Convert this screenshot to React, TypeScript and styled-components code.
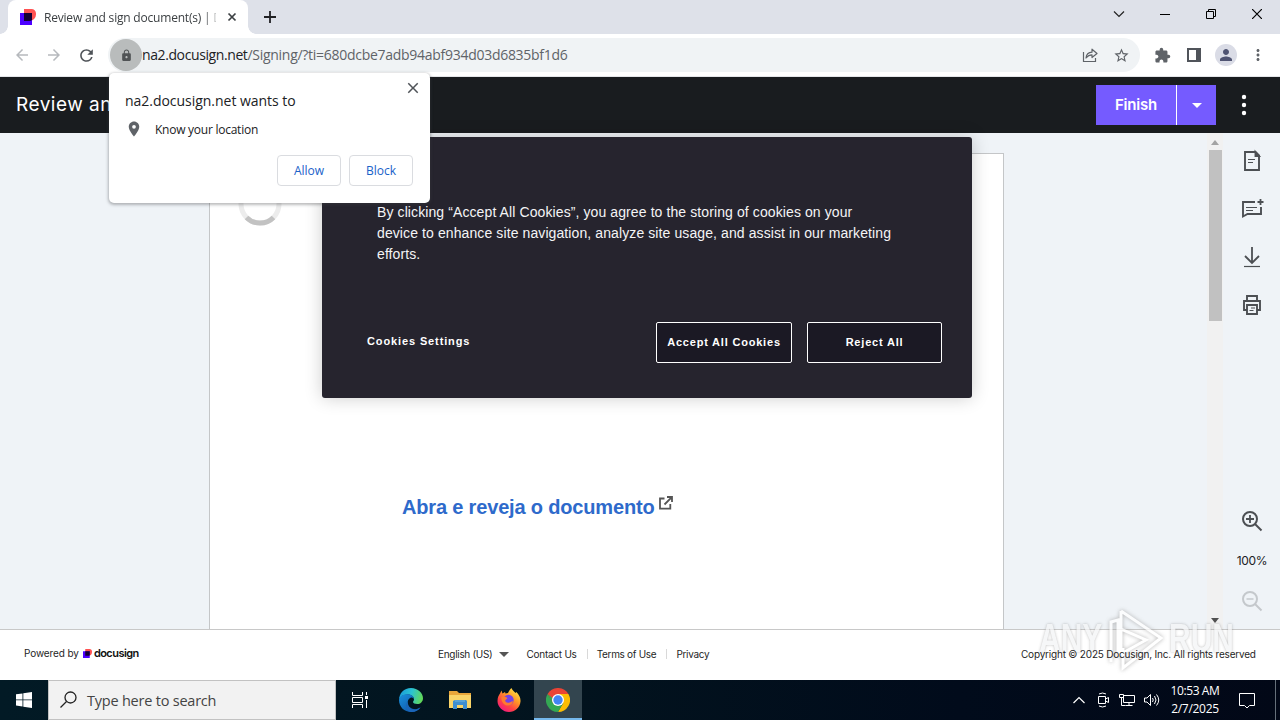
import styled, {createGlobalStyle} from "styled-components";
import * as React from "react";
import {
    MdArrowBack,
    MdArrowForward,
    MdClose,
    MdExtension,
    MdLock,
    MdMoreVert,
    MdPerson,
    MdPlace,
    MdRefresh,
    MdStarBorder,
} from "react-icons/md";

const system = `"Open Sans", "Noto Sans", sans-serif`;
const arial = `"Liberation Sans", Arial, sans-serif`;
const indigo = `Inter, "Liberation Sans", sans-serif`;

const GlobalStyle = createGlobalStyle`
    * {
        box-sizing: border-box;
    }
    body {
        margin: 0;
        overflow: hidden;
        font-family: ${system};
    }
    button {
        padding: 0;
        border: none;
        background: none;
        font: inherit;
    }
    svg {
        display: block;
        flex-shrink: 0;
    }
`;

const Screen = styled.div`
    position: relative;
    width: 1280px;
    height: 720px;
    display: flex;
    flex-direction: column;
    overflow: hidden;
    background: white;
`;

const Label = styled.span<{$size: number; $spacing?: number; $color?: string; $font?: string; $weight?: number}>`
    font-family: ${(p) => p.$font ?? system};
    font-size: ${(p) => p.$size}px;
    font-weight: ${(p) => p.$weight ?? 400};
    letter-spacing: ${(p) => p.$spacing ?? 0}px;
    color: ${(p) => p.$color ?? "#202124"};
    white-space: pre;
`;

/* browser */

const TabStrip = styled.div`
    height: 34px;
    flex-shrink: 0;
    display: flex;
    background: #dee1e9;
`;

const TabFoot = styled.div<{$side: "left" | "right"}>`
    width: 8px;
    height: 8px;
    margin-top: 26px;
    background: radial-gradient(circle at top ${(p) => p.$side}, transparent 7.5px, white 8px);
`;

const Tab = styled.div`
    width: 240px;
    height: 34px;
    padding: 0 10px 0 12px;
    display: flex;
    align-items: center;
    border-radius: 8px 8px 0 0;
    background: white;
`;

const TabTitle = styled.div`
    width: 172px;
    margin-left: 8px;
    line-height: 16px;
    mask-image: linear-gradient(to right, black 160px, rgba(0, 0, 0, 0.25) 172px);
`;

const TabClose = styled.div`
    margin-left: 11px;
`;

const NewTab = styled.div`
    padding: 11px 0 0 8px;
    flex: 1;
`;

const WindowButtons = styled.div`
    display: flex;
    height: 28px;
    align-items: center;
`;

const WindowButton = styled.button`
    width: 46px;
    display: flex;
    justify-content: center;
`;

const Toolbar = styled.div`
    height: 43px;
    flex-shrink: 0;
    display: flex;
    align-items: center;
    padding: 0 13px;
    border-bottom: 1px solid #e4e6e9;
    color: #5f6368;
`;

const NavButtons = styled.div`
    width: 95px;
    display: flex;
    gap: 14px;
    color: #b6b9bd;
    svg:last-child {
        color: #4f5358;
    }
`;

const Omnibox = styled.div`
    width: 1032px;
    height: 34px;
    padding: 0 10px 0 2px;
    display: flex;
    align-items: center;
    border-radius: 17px;
    background: #f0f3f5;
`;

const LockChip = styled.div`
    width: 32px;
    height: 32px;
    flex-shrink: 0;
    display: flex;
    align-items: center;
    justify-content: center;
    border-radius: 50%;
    background: #b9bcbc;
`;

const Url = styled.div`
    flex: 1;
    padding-bottom: 2px;
    white-space: nowrap;
`;

const OmniboxIcons = styled.div`
    display: flex;
    align-items: center;
    gap: 15px;
`;

const ToolbarIcons = styled.div`
    display: flex;
    align-items: center;
    margin-left: 14px;
`;

const Avatar = styled.div`
    width: 22px;
    height: 22px;
    margin: 0 12px 0 14px;
    display: flex;
    align-items: center;
    justify-content: center;
    border-radius: 50%;
    background: #dadce6;
    color: #4f5472;
`;

/* signing page */

const SigningHeader = styled.header`
    height: 56px;
    flex-shrink: 0;
    display: flex;
    align-items: center;
    padding: 0 33px 0 16px;
    background: #191c1f;
`;

const HeaderTitle = styled.div`
    flex: 1;
    padding-bottom: 2px;
`;

const FinishButton = styled.button`
    width: 81px;
    height: 40px;
    padding-bottom: 2px;
    border-right: 1px solid white;
    background: #755bff;
`;

const FinishMenu = styled.button`
    width: 39px;
    height: 40px;
    margin-right: 25px;
    display: flex;
    align-items: center;
    justify-content: center;
    background: #755bff;
`;

const Workspace = styled.main`
    height: 496px;
    flex-shrink: 0;
    display: flex;
    background: #eff3f7;
`;

const Viewer = styled.div`
    width: 1207px;
    padding: 20px 0 0 209px;
    overflow: hidden;
`;

const Sheet = styled.div`
    width: 795px;
    height: 600px;
    padding: 28px 0 0 28px;
    border: 1px solid #c4c6c8;
    background: white;
`;

const DocumentLink = styled.a`
    display: flex;
    align-items: flex-start;
    gap: 4px;
    margin: 270px 0 0 164px;
`;

const Scrollbar = styled.div`
    width: 16px;
    display: flex;
    flex-direction: column;
    align-items: center;
    justify-content: space-between;
    padding: 7px 0 6px;
    background: #f1f1f1;
`;

const ScrollThumb = styled.div`
    width: 13px;
    height: 171px;
    margin: 5px 0 auto;
    background: #c1c1c1;
`;

const Rail = styled.aside`
    width: 57px;
    display: flex;
    flex-direction: column;
    align-items: center;
    padding-top: 16px;
    color: #4c4f53;
`;

const RailTools = styled.div`
    display: flex;
    flex-direction: column;
    gap: 24px;
`;

const ZoomTools = styled.div`
    margin: 193px 0 0 1px;
    height: 102px;
    display: flex;
    flex-direction: column;
    align-items: center;
    justify-content: space-between;
`;

const ZoomLevel = styled.div`
    display: flex;
    padding-bottom: 2px;
`;

const Footer = styled.footer`
    height: 51px;
    flex-shrink: 0;
    display: flex;
    align-items: center;
    padding: 0 24px 0 24px;
    border-top: 1px solid #c8c8c8;
    background: white;
`;

const PoweredBy = styled.div`
    width: 414px;
    flex-shrink: 0;
    display: flex;
    align-items: center;
    gap: 4px;
    padding-bottom: 4px;
`;

const Brand = styled.span`
    display: flex;
    align-items: center;
    gap: 2px;
`;

const FooterLinks = styled.nav`
    width: 583px;
    flex-shrink: 0;
    display: flex;
    align-items: center;
    padding-bottom: 2px;
`;

const LanguageArrow = styled.span`
    margin: 0 17px 0 7px;
`;

const Separator = styled.span`
    width: 1px;
    height: 10px;
    margin: 0 9px 0 10px;
    background: #d9d9d9;
`;

/* stays readable above the watermark */
const Copyright = styled.div`
    position: relative;
    z-index: 5;
    display: flex;
    padding-bottom: 2px;
`;

/* overlays */

const Permission = styled.section`
    position: absolute;
    top: 73px;
    left: 109px;
    width: 321px;
    height: 130px;
    z-index: 3;
    padding: 17px 17px 17px 16px;
    border-radius: 5px;
    background: white;
    box-shadow: 0 1px 3px 1px rgba(60, 64, 67, 0.35);
`;

const PermissionClose = styled.button`
    position: absolute;
    top: 6px;
    right: 8px;
    color: #4f5358;
`;

const PermissionTitle = styled.div`
    height: 20px;
    line-height: 20px;
`;

const PermissionRow = styled.div`
    height: 20px;
    margin-top: 9px;
    display: flex;
    align-items: center;
    gap: 12px;
    color: #5f6368;
`;

const PermissionActions = styled.div`
    display: flex;
    justify-content: flex-end;
    gap: 8px;
    margin-top: 16px;
`;

const PermissionButton = styled.button`
    width: 64px;
    height: 31px;
    padding-bottom: 3px;
    border: 1px solid #dadce0;
    border-radius: 4px;
`;

const CookieBanner = styled.section`
    position: absolute;
    top: 137px;
    left: 322px;
    width: 650px;
    height: 261px;
    z-index: 2;
    padding: 65px 30px 35px 45px;
    display: flex;
    flex-direction: column;
    justify-content: space-between;
    border-radius: 3px;
    background: #26242e;
    box-shadow: 0 0 18px rgba(0, 0, 0, 0.2);
`;

const CookieText = styled.p`
    margin: 0 0 0 10px;
    font-family: ${arial};
    font-size: 14px;
    line-height: 21px;
    letter-spacing: 0.1px;
    color: #f4f4f6;
    white-space: pre-line;
`;

const CookieActions = styled.div`
    display: flex;
    align-items: center;
    gap: 15px;
`;

const CookieSettings = styled.button`
    margin-right: auto;
    padding-bottom: 7px;
`;

const CookieButton = styled.button<{$width: number}>`
    width: ${(p) => p.$width}px;
    height: 41px;
    padding-bottom: 6px;
    border: 1px solid white;
    border-radius: 2px;
    background: #1b1924;
`;

const Watermark = styled.div`
    position: absolute;
    top: 608px;
    left: 1039px;
    z-index: 4;
    display: flex;
    align-items: center;
    gap: 4px;
    height: 66px;
    opacity: 0.75;
    pointer-events: none;
`;

const WatermarkText = styled.span`
    width: 64px;
    padding-bottom: 7px;
    font-family: ${arial};
    font-size: 40px;
    font-weight: 700;
    line-height: 40px;
    transform: scaleX(0.75);
    transform-origin: left;
    color: #f4f5f6;
    text-shadow: 0 0 3px rgba(90, 90, 90, 0.55);
`;

/* taskbar */

const Taskbar = styled.div`
    height: 40px;
    flex-shrink: 0;
    display: flex;
    background: linear-gradient(to right, #021a25, #02131e 45%, #010b1b 75%, #020817);
`;

const TaskButton = styled.button<{$active?: boolean; $gap?: number}>`
    width: 48px;
    height: 40px;
    margin-left: ${(p) => p.$gap ?? 1}px;
    display: flex;
    align-items: center;
    justify-content: center;
    background: ${(p) => (p.$active ? "#33454f" : "transparent")};
    box-shadow: ${(p) => (p.$active ? "inset 0 -2px #76b9ed" : "none")};
`;

const SearchBox = styled.div`
    width: 288px;
    height: 40px;
    display: flex;
    align-items: center;
    gap: 10px;
    padding-left: 11px;
    border: 1px solid #c2c2c2;
    background: #f2f2f2;
`;

const Tray = styled.div`
    margin-left: auto;
    height: 40px;
    display: flex;
    align-items: center;
`;

const TrayIcons = styled.div`
    display: flex;
    align-items: center;
    gap: 8px;
`;

const Clock = styled.div`
    width: 70px;
    display: flex;
    flex-direction: column;
    align-items: center;
    line-height: 18px;
`;

const DesktopEdge = styled.div`
    width: 5px;
    height: 40px;
    margin-left: 11px;
    border-left: 1px solid #66707a;
`;

const Stroke = ({w, h, d, color = "currentColor", width = 1}: {
    w: number; h: number; d: string; color?: string; width?: number;
}) => (
    <svg width={w} height={h} viewBox={`0 0 ${w} ${h}`} fill="none" stroke={color} strokeWidth={width}>
        <path d={d}/>
    </svg>
);

const DocusignMark = ({size}: {size: number}) => (
    <svg width={size} height={size} viewBox="0 0 16 16">
        <path d="M4 0h7.5A4.5 4.5 0 0 1 16 4.5v1A6.5 6.5 0 0 1 9.500 12H4z" fill="#ff5252"/>
        <path d="M0 4h12v12H0z" fill="#4c00ff"/>
        <path d="M4 4h8v7q-1 1-2.500 1H4z" fill="#130032"/>
    </svg>
);

const Dots = () => (
    <svg width="6" height="22" fill="white">
        <circle cx="3" cy="3" r="2.200"/>
        <circle cx="3" cy="11" r="2.200"/>
        <circle cx="3" cy="19" r="2.200"/>
    </svg>
);

const ShareIcon = () => (
    <svg width="16" height="16" fill="none" stroke="#5f6368" strokeWidth="1.200">
        <path d="M1.500 5v9.500h12V11"/>
        <path d="M4 11q.5-5.500 6-5.800V2.200L15 6.500 10 10.500V7.800Q6.500 7.800 4 11z" strokeLinejoin="round"/>
    </svg>
);

const PanelIcon = () => (
    <svg width="14" height="14">
        <path d="M0 0h14v14H0zM2 2v10h7V2z" fill="#50545a" fillRule="evenodd"/>
    </svg>
);

const Spinner = () => (
    <svg width="44" height="44" fill="none" strokeWidth="5">
        <circle cx="22" cy="22" r="19" stroke="#ececec"/>
        <path d="M8.500 35.400A19 19 0 0 0 35.500 35.400" stroke="#c2c2c2"/>
    </svg>
);

const ExternalIcon = () => (
    <svg width="14" height="14" fill="none" stroke="#555" strokeWidth="1.800">
        <path d="M5.500 2.500H1v10.200h10.300V8M8 1h5v5M12.800 1.200L5.500 8.500"/>
    </svg>
);

const PageIcon = () => (
    <svg width="24" height="24" fill="none" stroke="currentColor" strokeWidth="1.900">
        <path d="M5 3h10.500L19 6.500V21H5z"/>
        <path d="M15.500 3v4H19z" fill="currentColor"/>
        <path d="M8 10.500h7M8 13.500h5" strokeWidth="1"/>
    </svg>
);

const CommentIcon = () => (
    <svg width="24" height="24" fill="none" stroke="currentColor" strokeWidth="1.900">
        <path d="M15 5H3v14.500L7.500 17H21v-7"/>
        <path d="M20.500 2v6M17.500 5h6" strokeWidth="1.800"/>
        <path d="M6 10.500h11M6 13.500h7" strokeWidth="1"/>
    </svg>
);

const DownloadIcon = () => (
    <svg width="24" height="24" fill="none" stroke="currentColor">
        <path d="M12 2v15.500M5 11l7 7 7-7" strokeWidth="1.800"/>
        <path d="M4 21.500h16" strokeWidth="1.200"/>
    </svg>
);

const PrintIcon = () => (
    <svg width="24" height="24" fill="none" stroke="currentColor" strokeWidth="1.900">
        <path d="M7 8V3h10v5M7 17H4V8h16v9h-3"/>
        <path d="M7 12h10v9H7z"/>
        <path d="M9.500 17.500h4M11 15h4" strokeWidth="1"/>
    </svg>
);

const ZoomIcon = ({plus}: {plus?: boolean}) => (
    <svg width="22" height="22" fill="none" stroke={plus ? "#4c4f53" : "#c4c8cc"} strokeWidth="2">
        <circle cx="9" cy="9" r="7"/>
        <path d="M14 14l6.500 6.500"/>
        <path d={plus ? "M5 9h8M9 5v8" : "M5.500 9h7"} strokeWidth={plus ? 1.8 : 1.5}/>
    </svg>
);

const WindowsLogo = () => (
    <svg width="16" height="16" fill="white">
        <path d="M0 2.300L6.500 1.400V7.500H0zM7.300 1.300L16 0v7.500H7.300zM0 8.300h6.500v6.200L0 13.600zM7.300 8.300H16V16l-8.700-1.300z"/>
    </svg>
);

const TaskViewIcon = () => (
    <svg width="18" height="18" fill="none" stroke="white">
        <path d="M1.500 1v3.500h10V1M1.500 17v-3.500h10V17M1.500 6.500h10v5h-10zM15.500 1v3M15.500 9v8"/>
        <path d="M14 5h3v3h-3z" fill="white" stroke="none"/>
    </svg>
);

const EdgeIcon = () => (
    <svg width="24" height="24" viewBox="0 0 24 24">
        <defs>
            <linearGradient id="edgeTop" x1="0" y1="0.300" x2="1" y2="0.500">
                <stop offset="0" stopColor="#199ad9"/>
                <stop offset="0.500" stopColor="#2bc3d2"/>
                <stop offset="1" stopColor="#62d957"/>
            </linearGradient>
            <linearGradient id="edgeLow" x1="0" y1="0" x2="1" y2="1">
                <stop offset="0" stopColor="#1a90dc"/>
                <stop offset="1" stopColor="#0c4ca0"/>
            </linearGradient>
        </defs>
        <path d="M0 12.500C0 5 5 0 12 0s12 5.200 12 10.200c0 3.500-2.700 5.800-5.700 5.800-2.500 0-4.300-.9-4.300-2 0-.7 1-.9 1-2.700C15 8.500 12 6.500 8.500 6.500 4 6.500 0 9.500 0 12.500z" fill="url(#edgeTop)"/>
        <path d="M0 12C.5 8 4.500 6.300 8.500 6.300c3.500 0 6.200 2 6.500 4.500-1-1-2-1.300-3-1.300-2.500 1-3.500 3-3.200 5.500.4 4 4.200 6.500 8 6.200 1.500-.1 3-.7 4.700-1.700C19.300 22.400 16 24 12 24 5.500 24 0 19 0 12z" fill="url(#edgeLow)"/>
        <path d="M8.200 13.500c-.8 5 4 9.300 9.300 7.700 1.500-.5 3-1.300 4-1.700-2.300 3.300-6 4.700-9.500 4.500-4.500-.8-6.500-6-3.800-10.500z" fill="#1b65b8"/>
    </svg>
);

const FolderIcon = () => (
    <svg width="22" height="20">
        <path d="M0 1h8l2 2h12v15H0z" fill="#e9a63a"/>
        <path d="M0 5h22v13H0z" fill="#fad468"/>
        <path d="M4 11l2-1h11l1 1v8h-4v-4H8v4H4z" fill="#3f8ed0"/>
        <path d="M6 10h10v2H6z" fill="#5aa3d6"/>
    </svg>
);

const FirefoxIcon = () => (
    <svg width="24" height="24" viewBox="0 0 24 24">
        <defs>
            <linearGradient id="fox" x1="0.900" y1="0" x2="0.200" y2="1">
                <stop offset="0" stopColor="#fff44f"/>
                <stop offset="0.400" stopColor="#ff9a26"/>
                <stop offset="0.700" stopColor="#ff4343"/>
                <stop offset="1" stopColor="#f0138a"/>
            </linearGradient>
        </defs>
        <path d="M4.500 2.500l1 3L8 4l.5 1.500L11 5c1-1.500 1.500-3.500 3.500-5 .3 2 2.500 3 4 5l.8-1c3 3 4.500 6 4.200 9.500C23 19.500 18 24 12 24S.5 19 .5 13c0-4 1.500-6 2.500-7.500z" fill="url(#fox)"/>
        <circle cx="11.500" cy="12" r="5.200" fill="#7542e5"/>
        <path d="M4.500 9c2.500-.8 4.500-.3 6 1.200L8.500 12c-.8 1 .5 3 3 2.700 2.200 0 3-1.800 4.500-1.500-.5 3.300-3.500 4.800-6 4.300-4-1-6-4.500-5.500-8.500z" fill="#ff7a2f"/>
    </svg>
);

const ChromeIcon = () => (
    <svg width="24" height="24" viewBox="0 0 24 24">
        <path d="M12 12L1.600 6A12 12 0 0 1 22.400 6z" fill="#ea4335"/>
        <path d="M12 12V6h10.400A12 12 0 0 1 12 24l5.200-9z" fill="#fbbc04"/>
        <path d="M12 12l5.200 3L12 24A12 12 0 0 1 1.600 6l5.200 9z" fill="#34a853"/>
        <path d="M1.600 6L6.800 15 12 6z" fill="#ea4335"/>
        <path d="M1.600 6l5.200 9 2-3z" fill="#34a853"/>
        <circle cx="12" cy="12" r="6" fill="white"/>
        <circle cx="12" cy="12" r="4.700" fill="#4285f4"/>
    </svg>
);

const BrowserChrome = () => (
    <>
        <TabStrip>
            <TabFoot $side="left"/>
            <Tab>
                <DocusignMark size={16}/>
                <TabTitle><Label $size={12} $spacing={-0.2} $color="#3c4043">Review and sign document(s) | D</Label></TabTitle>
                <TabClose><Stroke w={10} h={10} d="M1.500 1.500l7 7M8.500 1.500l-7 7" color="#3c4043" width={1.7}/></TabClose>
            </Tab>
            <TabFoot $side="right"/>
            <NewTab><Stroke w={12} h={12} d="M6 0v12M0 6h12" color="#202124" width={1.8}/></NewTab>
            <WindowButtons>
                <WindowButton><Stroke w={12} h={8} d="M1 1.500l5 5 5-5" color="#222" width={1.2}/></WindowButton>
                <WindowButton><Stroke w={10} h={10} d="M0 5.500h10" color="#000"/></WindowButton>
                <WindowButton><Stroke w={10} h={10} d="M.5 2.500h7v7h-7zM2.500 2.500v-2h7v7h-2" color="#000"/></WindowButton>
                <WindowButton><Stroke w={10} h={10} d="M0 0l10 10M10 0L0 10" color="#000" width={1.2}/></WindowButton>
            </WindowButtons>
        </TabStrip>
        <Toolbar>
            <NavButtons>
                <MdArrowBack size={18}/>
                <MdArrowForward size={18}/>
                <MdRefresh size={19}/>
            </NavButtons>
            <Omnibox>
                <LockChip><MdLock size={13} color="#505355"/></LockChip>
                <Url>
                    <Label $size={14} $spacing={-0.4}>na2.docusign.net</Label>
                    <Label $size={14} $spacing={-0.28} $color="#5f6368">/Signing/?ti=680dcbe7adb94abf934d03d6835bf1d6</Label>
                </Url>
                <OmniboxIcons>
                    <ShareIcon/>
                    <MdStarBorder size={17}/>
                </OmniboxIcons>
            </Omnibox>
            <ToolbarIcons>
                <MdExtension size={17}/>
                <svg width="16" height="1"/>
                <PanelIcon/>
                <Avatar><MdPerson size={18}/></Avatar>
                <MdMoreVert size={18}/>
            </ToolbarIcons>
        </Toolbar>
    </>
);

const PermissionPrompt = () => (
    <Permission>
        <PermissionClose><MdClose size={18}/></PermissionClose>
        <PermissionTitle><Label $size={14} $spacing={-0.03}>na2.docusign.net wants to</Label></PermissionTitle>
        <PermissionRow>
            <MdPlace size={18}/>
            <Label $size={12} $spacing={-0.25}>Know your location</Label>
        </PermissionRow>
        <PermissionActions>
            <PermissionButton><Label $size={12} $color="#1a62c9">Allow</Label></PermissionButton>
            <PermissionButton><Label $size={12} $color="#1a62c9">Block</Label></PermissionButton>
        </PermissionActions>
    </Permission>
);

const CookieConsent = () => (
    <CookieBanner>
        <CookieText>
            {`By clicking “Accept All Cookies”, you agree to the storing of cookies on your
            device to enhance site navigation, analyze site usage, and assist in our marketing
            efforts.`}
        </CookieText>
        <CookieActions>
            <CookieSettings><Label $font={arial} $size={11} $spacing={0.88} $weight={700} $color="white">Cookies Settings</Label></CookieSettings>
            <CookieButton $width={136}><Label $font={arial} $size={11} $spacing={0.8} $weight={700} $color="white">Accept All Cookies</Label></CookieButton>
            <CookieButton $width={135}><Label $font={arial} $size={11} $spacing={0.8} $weight={700} $color="white">Reject All</Label></CookieButton>
        </CookieActions>
    </CookieBanner>
);

const FooterText = ({children, spacing = 0}: {children: React.ReactNode; spacing?: number}) => (
    <Label $font={indigo} $size={10} $spacing={spacing} $color="#1f1f1f">{children}</Label>
);

export default function App() {
    return (
        <Screen>
            <GlobalStyle/>
            <BrowserChrome/>
            <SigningHeader>
                <HeaderTitle><Label $font={indigo} $size={19} $spacing={0.5} $color="white">Review an</Label></HeaderTitle>
                <FinishButton><Label $font={indigo} $size={15} $weight={600} $spacing={-0.2} $color="white">Finish</Label></FinishButton>
                <FinishMenu><svg width="10" height="5"><path d="M0 0h10L5 5z" fill="white"/></svg></FinishMenu>
                <Dots/>
            </SigningHeader>
            <Workspace>
                <Viewer>
                    <Sheet>
                        <Spinner/>
                        <DocumentLink>
                            <Label $font={arial} $size={20} $weight={700} $spacing={-0.17} $color="#2e6acb">Abra e reveja o documento</Label>
                            <ExternalIcon/>
                        </DocumentLink>
                    </Sheet>
                </Viewer>
                <Scrollbar>
                    <svg width="8" height="5"><path d="M0 5l4-5 4 5z" fill="#a3a3a3"/></svg>
                    <ScrollThumb/>
                    <svg width="8" height="5"><path d="M0 0l4 5 4-5z" fill="#505050"/></svg>
                </Scrollbar>
                <Rail>
                    <RailTools>
                        <PageIcon/>
                        <CommentIcon/>
                        <DownloadIcon/>
                        <PrintIcon/>
                    </RailTools>
                    <ZoomTools>
                        <ZoomIcon plus/>
                        <ZoomLevel><Label $font={indigo} $size={12} $spacing={-0.3}>100%</Label></ZoomLevel>
                        <ZoomIcon/>
                    </ZoomTools>
                </Rail>
            </Workspace>
            <Footer>
                <PoweredBy>
                    <FooterText spacing={-0.1}>Powered by</FooterText>
                    <Brand>
                        <DocusignMark size={9}/>
                        <Label $font={indigo} $size={11} $weight={600} $spacing={-0.55} $color="#111">docusign</Label>
                    </Brand>
                </PoweredBy>
                <FooterLinks>
                    <FooterText spacing={-0.3}>English (US)</FooterText>
                    <LanguageArrow><svg width="10" height="5"><path d="M0 0h10L5 5z" fill="#555"/></svg></LanguageArrow>
                    <FooterText spacing={-0.25}>Contact Us</FooterText>
                    <Separator/>
                    <FooterText spacing={-0.3}>Terms of Use</FooterText>
                    <Separator/>
                    <FooterText spacing={-0.3}>Privacy</FooterText>
                </FooterLinks>
                <Copyright>
                    <FooterText spacing={-0.2}>Copyright © 2025 Docusign, Inc. All rights reserved</FooterText>
                </Copyright>
            </Footer>
            <Taskbar>
                <TaskButton $gap={0}><WindowsLogo/></TaskButton>
                <SearchBox>
                    <svg width="17" height="18" fill="none" stroke="#222" strokeWidth="1.300">
                        <circle cx="10.500" cy="6.500" r="5.500"/>
                        <path d="M6.500 10.500L.5 16.500"/>
                    </svg>
                    <Label $size={14.5} $spacing={-0.22} $color="#444">Type here to search</Label>
                </SearchBox>
                <TaskButton $gap={0}><TaskViewIcon/></TaskButton>
                <TaskButton $gap={3}><EdgeIcon/></TaskButton>
                <TaskButton><FolderIcon/></TaskButton>
                <TaskButton><FirefoxIcon/></TaskButton>
                <TaskButton $active><ChromeIcon/></TaskButton>
                <Tray>
                    <TrayIcons>
                        <Stroke w={14} h={8} d="M.5 7L6 1.500 11.500 7" color="white" width={1.2}/>
                        <Stroke w={16} h={16} d="M3.500 4.500h7v7h-7zM10.500 7l3-1.500v5l-3-1.500M4 2q3.500-2 7 0M4 14q3.500 2 7 0" color="white"/>
                        <Stroke w={16} h={16} d="M4.500 3.500h11v7h-11zM10 10.500v3M6.500 13.500h7M.5 2.500h4v3h-4zM2.500 5.500v8h4" color="white"/>
                        <Stroke w={17} h={16} d="M1.500 6v4H4l3.500 3.500v-11L4 6zM9.500 6q1.500 2 0 4M11.500 4q3 4 0 8M13.500 2.500q4.500 5.500 0 11" color="white"/>
                    </TrayIcons>
                    <Clock>
                        <Label $size={12} $spacing={-0.4} $color="white">10:53 AM</Label>
                        <Label $size={12} $spacing={-0.3} $color="white">2/7/2025</Label>
                    </Clock>
                    <svg width="34" height="17" fill="none" stroke="white"><path d="M9.500 1.500h15v12h-5l-2.500 2.500-2.500-2.500h-5z"/></svg>
                    <DesktopEdge/>
                </Tray>
            </Taskbar>
            <PermissionPrompt/>
            <CookieConsent/>
            <Watermark>
                <WatermarkText>ANY</WatermarkText>
                <svg width="58" height="66" fill="none" stroke="white" strokeWidth="3" filter="drop-shadow(0 0 2px #999)">
                    <path d="M4 54V14l7-2v36M14 3l40 27-38 30V40M14 3v18l25 11-25 14z"/>
                </svg>
                <WatermarkText>RUN</WatermarkText>
            </Watermark>
        </Screen>
    );
}
